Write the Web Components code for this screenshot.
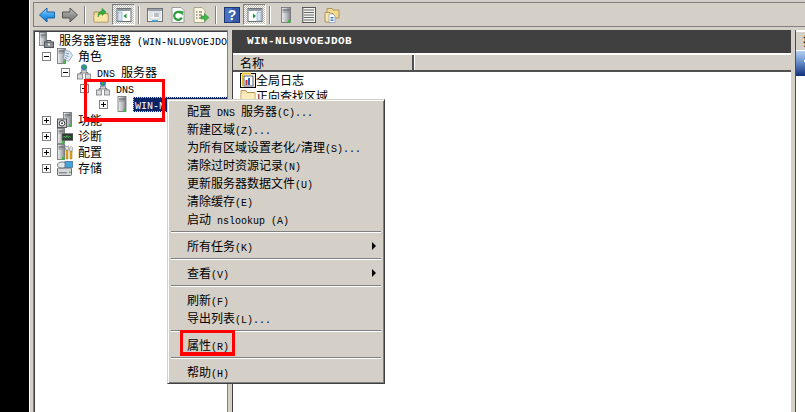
<!DOCTYPE html>
<html lang="zh">
<head>
<meta charset="utf-8">
<title>服务器管理器</title>
<style>
  html, body { margin: 0; height: 100%; background: #000; overflow: hidden; }
</style>
</head>
<body>
<mmc-app>
  <mmc-toolbar slot="toolbar">
    <tool-btn icon="back"></tool-btn>
    <tool-btn icon="forward"></tool-btn>
    <tool-sep></tool-sep>
    <tool-btn icon="up"></tool-btn>
    <tool-btn icon="paneLeft" pressed></tool-btn>
    <tool-sep></tool-sep>
    <tool-btn icon="props"></tool-btn>
    <tool-btn icon="refresh"></tool-btn>
    <tool-btn icon="export"></tool-btn>
    <tool-sep></tool-sep>
    <tool-btn icon="help"></tool-btn>
    <tool-btn icon="paneRight" pressed></tool-btn>
    <tool-sep></tool-sep>
    <tool-btn icon="tower"></tool-btn>
    <tool-btn icon="list"></tool-btn>
    <tool-btn icon="folders"></tool-btn>
  </mmc-toolbar>

  <tree-pane slot="tree">
    <tree-row icon="rootServer"><mix-text>服务器管理器 (WIN-NLU9VOEJDO</mix-text></tree-row>
    <tree-row level="0" exp="minus" icon="roles"><mix-text>角色</mix-text></tree-row>
    <tree-row level="1" exp="minus" icon="dns"><mix-text>DNS 服务器</mix-text></tree-row>
    <tree-row level="2" exp="minus" icon="dns"><mix-text>DNS</mix-text></tree-row>
    <tree-row level="3" exp="plus" icon="server" selected><mix-text>WIN-N</mix-text></tree-row>
    <tree-row level="0" exp="plus" icon="features"><mix-text>功能</mix-text></tree-row>
    <tree-row level="0" exp="plus" icon="diag"><mix-text>诊断</mix-text></tree-row>
    <tree-row level="0" exp="plus" icon="config"><mix-text>配置</mix-text></tree-row>
    <tree-row level="0" exp="plus" icon="storage"><mix-text>存储</mix-text></tree-row>
  </tree-pane>

  <result-pane slot="result" title-text="WIN-NLU9VOEJDOB" column="名称">
    <list-row icon="log">全局日志</list-row>
    <list-row icon="folder">正向查找区域</list-row>
  </result-pane>

  <action-pane slot="actions"></action-pane>

  <ctx-menu slot="over">
    <menu-item><mix-text>配置 DNS 服务器(C)...</mix-text></menu-item>
    <menu-item><mix-text>新建区域(Z)...</mix-text></menu-item>
    <menu-item><mix-text>为所有区域设置老化/清理(S)...</mix-text></menu-item>
    <menu-item><mix-text>清除过时资源记录(N)</mix-text></menu-item>
    <menu-item><mix-text>更新服务器数据文件(U)</mix-text></menu-item>
    <menu-item><mix-text>清除缓存(E)</mix-text></menu-item>
    <menu-item><mix-text>启动 nslookup (A)</mix-text></menu-item>
    <menu-sep></menu-sep>
    <menu-item arrow><mix-text>所有任务(K)</mix-text></menu-item>
    <menu-sep></menu-sep>
    <menu-item arrow><mix-text>查看(V)</mix-text></menu-item>
    <menu-sep></menu-sep>
    <menu-item><mix-text>刷新(F)</mix-text></menu-item>
    <menu-item><mix-text>导出列表(L)...</mix-text></menu-item>
    <menu-sep></menu-sep>
    <menu-item><mix-text>属性(R)</mix-text></menu-item>
    <menu-sep></menu-sep>
    <menu-item><mix-text>帮助(H)</mix-text></menu-item>
  </ctx-menu>

  <mark-box slot="over" style="left:84px;top:79px;width:81px;height:43px"></mark-box>
  <mark-box slot="over" style="left:180px;top:330px;width:55px;height:26px"></mark-box>
</mmc-app>

<script>
const CJK = '"Noto Sans CJK SC", sans-serif';

// little bitmap-ish icons, all on a 16 box
const towerShape = (x, y, w, h) => `
  <rect x="${x}" y="${y}" width="${w}" height="${h}" fill="url(#tw)" stroke="#6b6f72" stroke-width=".8"/>
  <rect x="${x + 1}" y="${y + 2}" width="${w - 2}" height="1" fill="#4c5054"/>
  <rect x="${x + 1}" y="${y + 4}" width="${w - 2}" height="1" fill="#8a8e92"/>
  <rect x="${x + w - 2.5}" y="${y + h - 2.5}" width="2.5" height="2.5" fill="#35c03a"/>`;
const towerGrad = `<linearGradient id="tw" x1="0" x2="1" y1="0" y2="0"><stop offset="0" stop-color="#eef0f1"/><stop offset=".6" stop-color="#b4b8bb"/><stop offset="1" stop-color="#7d8185"/></linearGradient>`;
const netShape = `
  <circle cx="8" cy="3.2" r="3" fill="#2f7fd0"/><path d="M6 1.6l2.6-.6 1 2-1.6 2.6-1-1.4z" fill="#35a83c"/>
  <path d="M4 10V8.600h8V10" fill="none" stroke="#6f7377"/>
  <rect x="5.500" y="6" width="5" height="3" fill="#c7cace" stroke="#77797c" stroke-width=".7"/>
  <rect x="1.500" y="10" width="5" height="5" fill="#d9dbdd" stroke="#77797c" stroke-width=".8"/>
  <rect x="9.500" y="10" width="5" height="5" fill="#d9dbdd" stroke="#77797c" stroke-width=".8"/>`;
const paneIcon = (panelX, tri) => `
  <rect x="1" y="1.500" width="14" height="13" fill="#fff" stroke="#6d7278"/>
  <rect x="1.500" y="2" width="13" height="2" fill="#8f979f"/>
  <rect x="${panelX}" y="5" width="4" height="9" fill="#d6e3f1" stroke="#7f9cc0" stroke-width=".6"/>
  <path d="${tri}" fill="#1f9a35"/>`;

const ICONS = {
  back: `<defs><linearGradient id="a" x1="0" x2="0" y1="0" y2="1"><stop offset="0" stop-color="#a8dcfb"/><stop offset=".55" stop-color="#2f9aea"/><stop offset="1" stop-color="#1a70c8"/></linearGradient></defs>
    <path d="M.5 8L8 1v4h7.500v6H8v4z" fill="url(#a)" stroke="#1c5fa5"/>`,
  forward: `<defs><linearGradient id="a" x1="0" x2="0" y1="0" y2="1"><stop offset="0" stop-color="#c4c4c0"/><stop offset=".55" stop-color="#8f8f8c"/><stop offset="1" stop-color="#777"/></linearGradient></defs>
    <path d="M15.500 8L8 1v4H.5v6H8v4z" fill="url(#a)" stroke="#555"/>`,
  up: `<path d="M1 5h5l1 1.500h8V15H1z" fill="#f5da8e" stroke="#a98d55"/><path d="M1.500 8h13v6.500h-13z" fill="#f9e6a8"/>
    <path d="M5 10c0-4 1.500-6 4-6V1.500L13 5 9 8.500V6.500c-1.500 0-3 1-4 3.500z" fill="#2fae3a" stroke="#1d7d28" stroke-width=".5"/>`,
  paneLeft: paneIcon(2, 'M10.500 6.500v5L7.500 9z'),
  paneRight: paneIcon(10, 'M6 6.500v5L9 9z'),
  props: `<rect x=".5" y="1.500" width="15" height="13" fill="#f4f5f6" stroke="#6d7278"/><rect x="1" y="2" width="14" height="2" fill="#98a0a8"/>
    <rect x="3" y="5" width="10" height="7" fill="#fff" stroke="#aab0b6" stroke-width=".6"/><path d="M4.500 7h1M7 7h5M4.500 9h1M7 9h5" stroke="#71808f"/>
    <rect x="5" y="13" width="6" height="1.500" fill="#3bb0e6"/>`,
  refresh: `<path d="M2 .5h9l3 3v12H2z" fill="#fff" stroke="#9a9c9e"/>
    <path d="M11.800 10.500A4 4 0 1 1 11 6" fill="none" stroke="#2a9d3b" stroke-width="2.200"/><path d="M9 3.500l4.500 1-1 4z" fill="#2a9d3b"/>`,
  export: `<path d="M1 .5h8l3 3v12H1z" fill="#fbf7df" stroke="#a8a58f"/><path d="M3 5h1.500M6 5h3M3 8h1.500M6 8h3M3 11h1.500M6 11h2" stroke="#555"/>
    <path d="M8 9h3.500V6.500L16 10.500 11.500 14.500V12H8z" fill="#43b649" stroke="#2b8733" stroke-width=".5"/>`,
  help: `<rect x=".5" y=".5" width="15" height="15" fill="#3358a8" stroke="#1d3570"/><rect x="1" y="1" width="7" height="14" fill="#4a70c0"/>
    <text x="8" y="13" text-anchor="middle" font-family="Liberation Sans" font-weight="bold" font-size="14" fill="#fff">?</text>`,
  tower: `<defs>${towerGrad}</defs>${towerShape(3.500, .500, 9, 15)}`,
  list: `<rect x="1.500" y=".5" width="13" height="15" fill="#f2f2f0" stroke="#555"/><path d="M3 3h10M3 5.500h10M3 8h10M3 10.500h10M3 13h10" stroke="#666"/><rect x="1" y="1" width="1.500" height="14" fill="#777"/>`,
  folders: `<path d="M3 3.500V1.500h5l1 1.500h6v8H3z" fill="#f3d98f" stroke="#ad955c"/><path d="M1 5.500h5l1 1h2V15H1z" fill="#f9e5ac" stroke="#ad955c"/>
    <path d="M5 7h4l2 2v6.500H5z" fill="#fff" stroke="#7f98b8" stroke-width=".7"/><path d="M6.500 10.500h3M6.500 12h3M6.500 13.500h3" stroke="#3f7fc0"/>`,
  rootServer: `<defs>${towerGrad}</defs>${towerShape(1.500, .500, 7, 13)}
    <rect x="6.500" y="10" width="9" height="5.500" fill="#8a8f94" stroke="#4f5357"/><path d="M9 10V8.500h4V10" fill="none" stroke="#4f5357"/><rect x="10" y="11.500" width="2" height="2" fill="#e8e8e8"/>`,
  roles: `<defs>${towerGrad}</defs>${towerShape(.500, .500, 8, 15)}
    <path d="M8 2l5 1.500 2.500 4-4 6-5-3z" fill="#dbe8f6" stroke="#7e93ad" stroke-width=".7"/><path d="M9 5l3 1M8.500 7.500l3 1M8 9.500l2 1" stroke="#54708f" stroke-width=".7"/>`,
  dns: netShape,
  server: `<defs>${towerGrad}</defs>${towerShape(4, .500, 8, 15)}`,
  features: `<defs>${towerGrad}</defs>${towerShape(6.500, .500, 8, 14)}
    <rect x=".5" y="7" width="9" height="8.500" fill="#c9cccf" stroke="#55585c"/><circle cx="5" cy="11.300" r="2.800" fill="#fff" stroke="#3b3e42"/><circle cx="5" cy="11.300" r="1" fill="#3b3e42"/>`,
  diag: `<defs>${towerGrad}</defs>${towerShape(.500, .500, 7, 15)}
    <rect x="5" y="5.500" width="11" height="7" fill="#2e3a33" stroke="#6b6f72" stroke-width=".7"/><path d="M6 9.500l1.500-1.500 1 2 1.500-2.500 1 2 1.500-1 1.500 1" fill="none" stroke="#4fd060" stroke-width=".8"/>`,
  config: `<defs>${towerGrad}</defs>${towerShape(.500, .500, 7, 15)}
    <path d="M9 6h2v9H9zM13 7h2v8h-2z" fill="#e7aa22" stroke="#9b6c0e" stroke-width=".5"/><path d="M8.500 6V1.500L10 3l1.500-1.500V6zM12.500 7V3.500l2-1 1 1V7z" fill="#dfe2e5" stroke="#7e8286" stroke-width=".5"/>`,
  storage: `<rect x=".5" y="8" width="14" height="7.500" rx="1" fill="#d4d7da" stroke="#666a6e"/><rect x="2" y="12" width="8" height="1.500" fill="#8b9095"/><rect x="12" y="11.500" width="1.500" height="1.500" fill="#35c03a"/>
    <ellipse cx="5" cy="5" rx="4.500" ry="3" fill="#e3e5e7" stroke="#7c8084"/><rect x="8" y="1.500" width="7.500" height="6" fill="#43a3dc" stroke="#4c6f89" stroke-width=".8"/>`,
  log: `<rect x=".5" y="1.500" width="15" height="14" fill="#fdf6d4" stroke="#000"/><path d="M2 .5h9v2H2z" fill="#e8c53f"/><rect x="4" y="4" width="9" height="10" fill="#fff" stroke="#33406b" stroke-width=".8"/>
    <rect x="5.500" y="8" width="2" height="5" fill="#d02b2b"/><rect x="8" y="6" width="2" height="7" fill="#2b5fc0"/><rect x="2" y="3" width="1.500" height="11" fill="#d9b52a"/>`,
  folder: `<path d="M1 4.500V2.500h5l1 2h8V15H1z" fill="#f7e2a4" stroke="#b49b63"/><path d="M1.500 5.500h13V14.500h-13z" fill="#fbecbd"/>`
};

class UiIcon extends HTMLElement {
  static get observedAttributes() {
    return ["name"];
  }
  constructor() {
    super();
    this.attachShadow({ mode: "open" });
  }
  attributeChangedCallback() {
    this.shadowRoot.innerHTML = `
      <style>:host { display: block; width: 16px; height: 16px; } svg { display: block; }</style>
      <svg width="16" height="16" viewBox="0 0 16 16">${ICONS[this.getAttribute("name")] || ""}</svg>`;
  }
}

// CJK at 12px, latin at 10px mono: this gives the 12/6 cells of the old bitmap font
class MixText extends HTMLElement {
  connectedCallback() {
    if (this.shadowRoot) return;
    const text = this.textContent;
    this.textContent = "";
    const parts = text.match(/[\x00-\x7f]+|[^\x00-\x7f]+/g) || [];
    this.attachShadow({ mode: "open" }).innerHTML =
      `<style>:host { display: inline; white-space: pre; font: 12px/14px ${CJK}; }` +
      `.l { font: 10px/14px "Liberation Mono", monospace; }</style>` +
      parts.map(p => /^[\x00-\x7f]/.test(p) ? `<span class="l">${p}</span>` : `<span>${p}</span>`).join("");
  }
}

class MmcApp extends HTMLElement {
  constructor() {
    super();
    this.attachShadow({ mode: "open" }).innerHTML = `
      <style>
        :host { display: flex; position: relative; width: 805px; height: 412px; background: #000; overflow: hidden; color: #000; }
        .win { margin-left: 29px; flex: 1; min-width: 0; display: flex; flex-direction: column; background: #d4d0c8; border-left: 1px solid #fff; padding: 2px 0 0 3px; }
        .panes { flex: 1; min-height: 0; margin-top: 3px; display: flex; }
      </style>
      <div class="win">
        <slot name="toolbar"></slot>
        <div class="panes">
          <slot name="tree"></slot>
          <slot name="result"></slot>
          <slot name="actions"></slot>
        </div>
      </div>
      <slot name="over"></slot>`;
  }
}

class MmcToolbar extends HTMLElement {
  constructor() {
    super();
    this.attachShadow({ mode: "open" }).innerHTML = `
      <style>
        :host { display: flex; align-items: center; box-sizing: border-box; height: 25px; padding-left: 1px; border: 1px solid #808080; border-width: 1px 0 1px 1px; }
      </style>
      <slot></slot>`;
  }
}

class ToolBtn extends HTMLElement {
  constructor() {
    super();
    this.attachShadow({ mode: "open" }).innerHTML = `
      <style>
        :host { display: flex; align-items: center; justify-content: center; width: 23px; height: 21px; box-sizing: border-box; }
        :host([pressed]) {
          border: 1px solid; border-color: #808080 #fff #fff #808080;
          background: repeating-conic-gradient(#fff 0 25%, #bdb9b1 0 50%) 0 0 / 2px 2px;
        }
      </style>
      <ui-icon></ui-icon>`;
  }
  connectedCallback() {
    this.shadowRoot.querySelector("ui-icon").setAttribute("name", this.getAttribute("icon"));
  }
}

class ToolSep extends HTMLElement {
  constructor() {
    super();
    this.attachShadow({ mode: "open" }).innerHTML = `
      <style>
        :host { display: block; width: 1px; height: 18px; margin: 0 3px; background: #808080; border-right: 1px solid #fff; }
      </style>`;
  }
}

class TreePane extends HTMLElement {
  constructor() {
    super();
    this.attachShadow({ mode: "open" }).innerHTML = `
      <style>
        :host { display: block; box-sizing: border-box; width: 195px; flex: none; background: #fff; padding: 1px 0 0 2px; overflow: hidden;
          border: 1px solid #808080; border-bottom: 0; box-shadow: inset 1px 1px 0 #404040; }
      </style>
      <slot></slot>`;
  }
}

class TreeRow extends HTMLElement {
  constructor() {
    super();
    this.attachShadow({ mode: "open" }).innerHTML = `
      <style>
        :host { display: flex; align-items: center; height: 16px; white-space: nowrap; padding-left: calc(var(--level, 0) * 19px); }
        .exp { flex: none; width: 19px; height: 16px; display: flex; align-items: center; padding-left: 6px; box-sizing: border-box; }
        ui-icon { flex: none; margin: 0 2px; }
        .label { margin-left: 2px; padding: 0 1px; height: 15px; line-height: 14px; flex: none; }
        :host([selected]) .label {
          margin-left: 1px; padding-left: 2px; margin-top: 1px;
          background: #0a246a; color: #fff; outline: 1px dotted #d4d0c8; outline-offset: -1px; width: 100px; font-weight: bold;
        }
      </style>
      <span class="exp"></span><ui-icon></ui-icon><span class="label"><slot></slot></span>`;
  }
  connectedCallback() {
    const level = this.getAttribute("level");
    if (level) this.style.setProperty("--level", level);
    this.shadowRoot.querySelector("ui-icon").setAttribute("name", this.getAttribute("icon"));
    const exp = this.shadowRoot.querySelector(".exp");
    const kind = this.getAttribute("exp");
    if (!kind) { exp.style.display = "none"; return; }
    exp.innerHTML = `<svg width="9" height="9" viewBox="0 0 9 9" style="display:block">
      <rect x=".5" y=".5" width="8" height="8" fill="#fff" stroke="#808080"/>
      <path d="M2 4.500h5${kind === "plus" ? "M4.500 2v5" : ""}" stroke="#000"/></svg>`;
  }
}

class ResultPane extends HTMLElement {
  constructor() {
    super();
    this.attachShadow({ mode: "open" }).innerHTML = `
      <style>
        :host { display: flex; flex-direction: column; box-sizing: border-box; flex: none; width: 559px; margin-left: 4px; border-left: 1px solid #404040; background: #fff; overflow: hidden; }
        .title { height: 23px; flex: none; background: #404040; color: #fff; padding-left: 14px; font: bold 11px/22px "Liberation Mono", monospace; letter-spacing: .4px; }
        .head { display: flex; flex: none; box-sizing: border-box; height: 18px; margin-top: 1px; border-top: 1px solid #fff; background: #d4d0c8; border-bottom: 2px solid #505050; }
        .c1 { box-sizing: border-box; width: 181px; padding-left: 7px; font: 12px/15px ${CJK}; border-right: 2px solid #505050; box-shadow: 1px 0 0 #fff; }
      </style>
      <div class="title"></div>
      <div class="head"><div class="c1"></div></div>
      <div class="list"><slot></slot></div>`;
  }
  connectedCallback() {
    this.shadowRoot.querySelector(".title").textContent = this.getAttribute("title-text");
    this.shadowRoot.querySelector(".c1").textContent = this.getAttribute("column");
  }
}

class ListRow extends HTMLElement {
  constructor() {
    super();
    this.attachShadow({ mode: "open" }).innerHTML = `
      <style>
        :host { display: flex; align-items: center; height: 16px; padding-left: 7px; font: 12px/16px ${CJK}; white-space: nowrap; }
      </style>
      <ui-icon></ui-icon><slot></slot>`;
  }
  connectedCallback() {
    this.shadowRoot.querySelector("ui-icon").setAttribute("name", this.getAttribute("icon"));
  }
}

class ActionPane extends HTMLElement {
  constructor() {
    super();
    this.attachShadow({ mode: "open" }).innerHTML = `
      <style>
        :host { display: block; flex: none; width: 10px; margin-left: 4px; border-left: 1px solid #505050; background: #fff; overflow: hidden; }
        .hd { height: 18px; margin-top: 2px; background: #d4d0c8; padding-left: 7px; font: 12px/18px ${CJK}; white-space: nowrap; box-sizing: border-box; }
        .bar { height: 25px; margin-top: 1px; background: linear-gradient(#b4d0f0, #6f97d0 40%, #12307c); padding: 9px 0 0 8px; box-sizing: border-box; }
        .bar i { display: block; width: 4px; height: 2px; background: #fff; }
      </style>
      <div class="hd">操作</div>
      <div class="bar"><i></i></div>`;
  }
}

class CtxMenu extends HTMLElement {
  constructor() {
    super();
    this.attachShadow({ mode: "open" }).innerHTML = `
      <style>
        :host { position: absolute; left: 167px; top: 99px; width: 218px; box-sizing: border-box; background: #d4d0c8; padding: 2px;
          border: 1px solid; border-color: #d4d0c8 #404040 #404040 #d4d0c8; box-shadow: inset 1px 1px 0 #fff, inset -1px -1px 0 #808080; }
      </style>
      <slot></slot>`;
  }
}

class MenuItem extends HTMLElement {
  constructor() {
    super();
    this.attachShadow({ mode: "open" }).innerHTML = `
      <style>
        :host { display: flex; align-items: center; box-sizing: border-box; height: 18px; padding: 2px 0 0 17px; white-space: nowrap; position: relative; }
        :host([arrow])::after { content: ""; position: absolute; right: 6px; top: 5px; border: 4px solid transparent; border-left-color: #000; border-right-width: 0; }
      </style>
      <slot></slot>`;
  }
}

class MenuSep extends HTMLElement {
  constructor() {
    super();
    this.attachShadow({ mode: "open" }).innerHTML = `
      <style>
        :host { display: block; height: 2px; margin: 3px 1px 4px; background: linear-gradient(#808080 50%, #fff 50%); }
      </style>`;
  }
}

class MarkBox extends HTMLElement {
  constructor() {
    super();
    this.attachShadow({ mode: "open" }).innerHTML = `
      <style>
        :host { position: absolute; box-sizing: border-box; border: 3px solid #f00; border-bottom-width: 4px; pointer-events: none; }
      </style>`;
  }
}

customElements.define("ui-icon", UiIcon);
customElements.define("mix-text", MixText);
customElements.define("mmc-app", MmcApp);
customElements.define("mmc-toolbar", MmcToolbar);
customElements.define("tool-btn", ToolBtn);
customElements.define("tool-sep", ToolSep);
customElements.define("tree-pane", TreePane);
customElements.define("tree-row", TreeRow);
customElements.define("result-pane", ResultPane);
customElements.define("list-row", ListRow);
customElements.define("action-pane", ActionPane);
customElements.define("ctx-menu", CtxMenu);
customElements.define("menu-item", MenuItem);
customElements.define("menu-sep", MenuSep);
customElements.define("mark-box", MarkBox);
</script>
</body>
</html>
